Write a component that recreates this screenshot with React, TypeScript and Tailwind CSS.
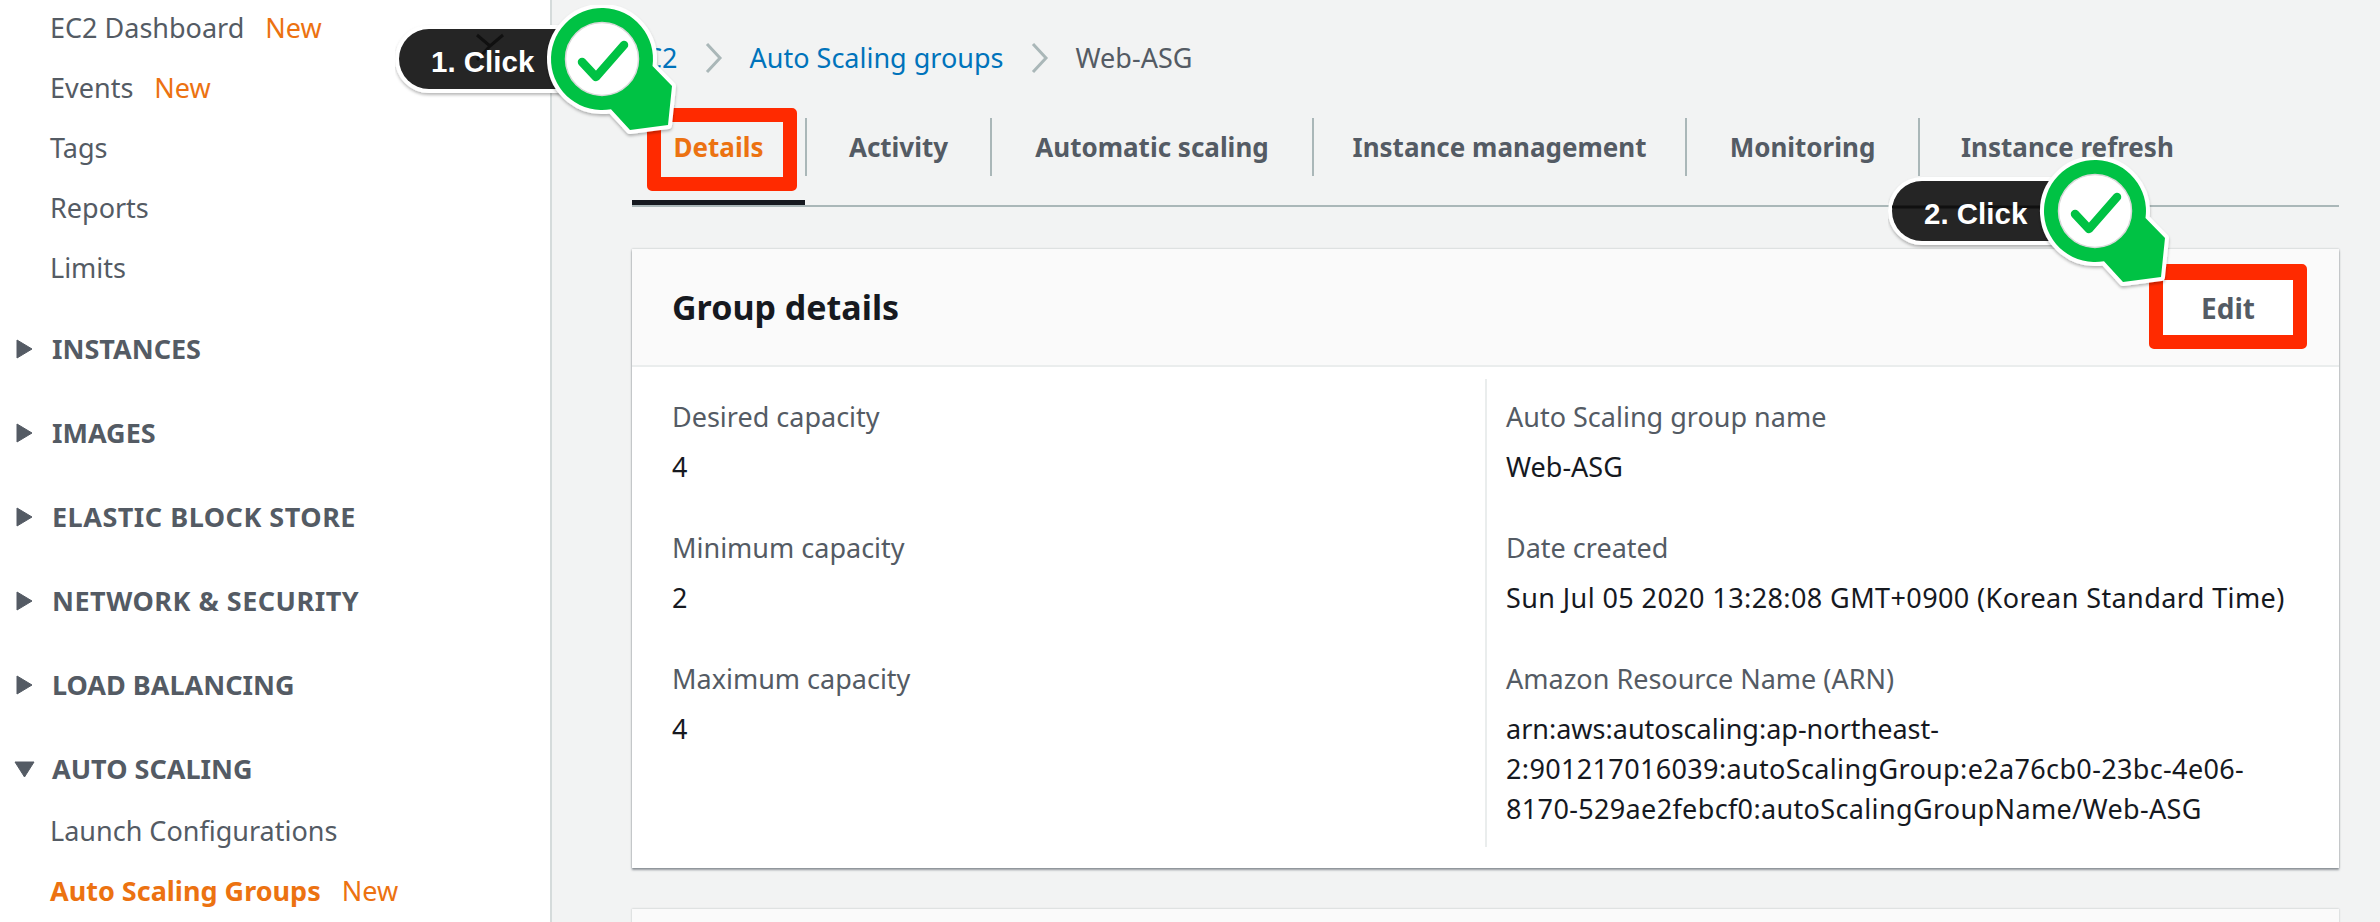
const navTop = ["EC2 Dashboard", "Events", "Tags", "Reports", "Limits"];
const navSections = [
  { label: "INSTANCES", track: "" },
  { label: "IMAGES", track: "" },
  { label: "ELASTIC BLOCK STORE", track: "tracking-[0.5px]" },
  { label: "NETWORK & SECURITY", track: "tracking-[0.5px]" },
  { label: "LOAD BALANCING", track: "" },
];
const tabs = [
  { label: "Activity", width: "w-[185px]" },
  { label: "Automatic scaling", width: "w-[322px]" },
  { label: "Instance management", width: "w-[373px]" },
  { label: "Monitoring", width: "w-[233px]" },
];

function NewLabel() {
  return <span className="ml-[21px] text-[#ec7211]">New</span>;
}

function Section({ label, open, track }: { label: string; open?: boolean; track?: string }) {
  return (
    <div className="flex h-[60px] items-center text-[#545b64]">
      <div className="flex w-[52px] justify-center">
        {open ? (
          <svg width="21" height="17" viewBox="0 0 21 17" className="ml-[-4px]">
            <path d="M1 1h19L10.5 16z" fill="#545b64" stroke="#545b64" strokeLinejoin="round" />
          </svg>
        ) : (
          <svg width="17" height="20" viewBox="0 0 17 20" className="ml-[-3px]">
            <path d="M1 1l15 9L1 19z" fill="#545b64" stroke="#545b64" strokeLinejoin="round" />
          </svg>
        )}
      </div>
      <span className={`font-bold ${track}`}>{label}</span>
    </div>
  );
}

function Sidebar() {
  return (
    <aside className="w-[552px] shrink-0 border-r-2 border-[#d5dbdb] bg-white">
      <div className="mt-[-2px] text-[#545b64]">
        {navTop.map((item) => (
          <div key={item} className="flex h-[60px] items-center pl-[50px]">
            {item}
            {(item === "EC2 Dashboard" || item === "Events") && <NewLabel />}
          </div>
        ))}
        <div className="mt-[21px] space-y-6">
          {navSections.map((s) => (
            <Section key={s.label} label={s.label} track={s.track} />
          ))}
          <Section label="AUTO SCALING" open />
        </div>
        <div className="mt-[2px] flex h-[60px] items-center pl-[50px]">Launch Configurations</div>
        <div className="flex h-[60px] items-center pl-[50px] font-bold text-[#ec7211]">
          Auto Scaling Groups
          <span className="ml-[21px] font-normal">New</span>
        </div>
      </div>
    </aside>
  );
}

function Chevron() {
  return (
    <svg width="20" height="32" viewBox="0 0 20 32" fill="none" stroke="#aab7b8" strokeWidth="3" className="mx-[26px]">
      <path d="M3 2l13 14L3 30" />
    </svg>
  );
}

function Field({ label, children }: { label: string; children: React.ReactNode }) {
  return (
    <div className="mb-[41px]">
      <div className="text-[#545b64]">{label}</div>
      <div className="mt-[10px] text-[#16191f]">{children}</div>
    </div>
  );
}

function Callout({ text, behind, className }: { text: string; behind: string; className: string }) {
  const pin = "M257.500 61L277 81L273 120L235 125L216 104.200A51 51 0 1 1 257.500 61z";
  return (
    <div className={`absolute h-[140px] w-[300px] ${className}`}>
      <svg width="300" height="140" viewBox="0 0 300 140" className="absolute left-0 top-0">
        <defs>
          <filter id="soft" x="-10%" y="-10%" width="120%" height="120%">
            <feDropShadow dx="0" dy="2" stdDeviation="1.5" floodColor="#000" floodOpacity="0.28" />
          </filter>
        </defs>
        <rect x="0" y="20" width="210" height="68" rx="34" fill="#fff" filter="url(#soft)" />
        <rect x="4" y="24" width="206" height="60" rx="30" fill="#252525" />
        <path d={behind} fill="none" stroke="#101010" strokeWidth="3" />
        <path d={pin} fill="#fff" stroke="#fff" strokeWidth="8" strokeLinejoin="round" filter="url(#soft)" />
        <path d={pin} fill="#00c244" />
        <circle cx="207" cy="54" r="36.500" fill="#fff" stroke="#d9d9d9" strokeWidth="1.500" />
        <path d="M187 57L201 72L229 40" fill="none" stroke="#00c244" strokeWidth="8.500" strokeLinecap="round" strokeLinejoin="round" />
      </svg>
      <div className="absolute left-[36px] top-[37px] font-['Liberation_Sans',sans-serif] text-[29.500px] font-bold leading-[40px] text-white">
        {text}
      </div>
    </div>
  );
}

function GroupDetails() {
  return (
    <section className="bg-white shadow-[0_2px_2px_rgba(84,91,100,0.6),0_0_2px_rgba(0,28,36,0.25)]">
      <div className="flex h-[118px] items-center justify-between border-b-2 border-[#eaeded] bg-[#fafafa] pl-[40px] pr-[46px]">
        <h2 className="text-[34px] font-bold text-[#16191f]">Group details</h2>
        <button className="flex h-[58px] w-[130px] items-center justify-center border-t-2 border-[#545b64] bg-white text-[28px] font-bold text-[#545b64]">
          Edit
        </button>
      </div>
      <div className="flex pb-[21px] pt-[12px]">
        <div className="w-[853px] pl-[40px] pt-[18px]">
          <Field label="Desired capacity">4</Field>
          <Field label="Minimum capacity">2</Field>
          <Field label="Maximum capacity">4</Field>
        </div>
        <div className="w-[820px] border-l-2 border-[#eaeded] pb-[18px] pl-[19px] pt-[18px]">
          <Field label="Auto Scaling group name">Web-ASG</Field>
          <Field label="Date created">
            <span className="tracking-[0.4px]">Sun Jul 05 2020 13:28:08 GMT+0900 (Korean Standard Time)</span>
          </Field>
          <div>
            <div className="text-[#545b64]">Amazon Resource Name (ARN)</div>
            <div className="mt-[10px] max-w-[775px] text-[#16191f]">
              arn:aws:autoscaling:ap-northeast-
              <span className="tracking-[0.35px]">
                2:901217016039:autoScalingGroup:e2a76cb0-23bc-4e06-8170-529ae2febcf0:autoScalingGroupName/Web-ASG
              </span>
            </div>
          </div>
        </div>
      </div>
    </section>
  );
}

export default function App() {
  return (
    <div className="relative flex h-[922px] w-[2380px] overflow-hidden bg-[#f2f3f3] font-['Noto_Sans',sans-serif] text-[27px] leading-[40px]">
      <Sidebar />
      <main className="flex-1 pl-[80px] pr-[41px]">
        <nav className="ml-[-2px] flex h-[116px] items-center">
          <span className="text-[#0073bb]">EC2</span>
          <Chevron />
          <span className="text-[#0073bb]">Auto Scaling groups</span>
          <Chevron />
          <span className="text-[#545b64]">Web-ASG</span>
        </nav>
        <div className="flex h-[91px] border-b-2 border-[#aab7b8] pt-[2px] text-[26px]">
          <div className="flex h-full w-[173px] items-center justify-center border-b-[5px] border-[#16191f] pb-[24px] font-bold text-[#ec7211]">
            Details
          </div>
          {tabs.map((t) => (
            <div key={t.label} className={`flex h-[58px] items-center justify-center border-l-2 border-[#aab7b8] font-bold text-[#545b64] ${t.width}`}>
              {t.label}
            </div>
          ))}
          <div className="flex h-[58px] items-center border-l-2 border-[#aab7b8] pl-[41px] font-bold text-[#545b64]">
            Instance refresh
          </div>
        </div>
        <div className="mt-[42px]">
          <GroupDetails />
        </div>
        <div className="mt-[41px] h-[40px] bg-[#fafafa] shadow-[0_0_2px_rgba(0,28,36,0.25)]" />
      </main>

      {/* red highlight boxes over the tab and the button */}
      <div className="pointer-events-none absolute left-[647px] top-[108px] h-[83px] w-[150px] rounded-[5px] border-[14px] border-[#ff2a00]" />
      <div className="pointer-events-none absolute left-[2149px] top-[264px] h-[85px] w-[158px] rounded-[5px] border-[14px] border-t-[16px] border-[#ff2a00]" />

      <Callout text="1. Click" behind="M82 30L95 41L108 30M95 41L82 55" className="left-[395px] top-[5px]" />
      <Callout text="2. Click" behind="M4 50H210" className="left-[1888px] top-[157px]" />
    </div>
  );
}
